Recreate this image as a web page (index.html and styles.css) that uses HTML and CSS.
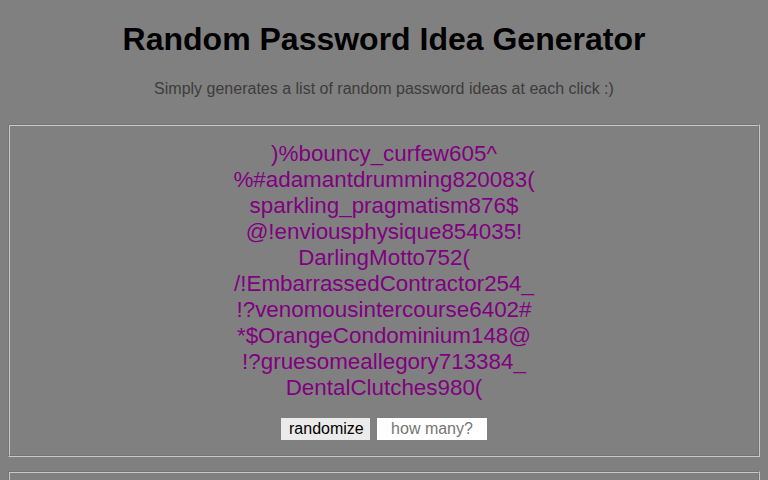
FILE: index.html
```html
<!DOCTYPE html>
<html>
<head>
<meta charset="utf-8">
<link rel="stylesheet" href="styles.css">
</head>
<body>
<h1 class="title">Random Password Idea Generator</h1>
<p class="subtitle">Simply generates a list of random password ideas at each click :)</p>
<fieldset class="box">
  <div class="list">
    <div>)%bouncy_curfew605^</div>
    <div>%#adamantdrumming820083(</div>
    <div>sparkling_pragmatism876$</div>
    <div>@!enviousphysique854035!</div>
    <div>DarlingMotto752(</div>
    <div>/!EmbarrassedContractor254_</div>
    <div>!?venomousintercourse6402#</div>
    <div>*$OrangeCondominium148@</div>
    <div>!?gruesomeallegory713384_</div>
    <div>DentalClutches980(</div>
  </div>
  <div class="controls">
    <button class="btn">randomize</button>
    <input class="count" type="text" placeholder="how many?">
  </div>
</fieldset>
<fieldset class="box second"></fieldset>
</body>
</html>
```

FILE: styles.css
```css
html, body {
  background: #808080;
}
body {
  margin: 8px;
  font-family: "Liberation Sans", Arial, sans-serif;
  text-align: center;
}
.title {
  font-size: 32px;
  font-weight: bold;
  color: #000;
  margin: 13px 0 0;
  line-height: 37px;
}
.subtitle {
  font-size: 16px;
  color: #3c3c3c;
  margin: 22px 0 0;
  line-height: 18px;
}
.box {
  margin: 26px 0 0;
  padding: 15px 12px 0;
  border: 2px groove #c8c8c8;
  min-height: 0;
}
.list {
  color: #800080;
  font-size: 22.4px;
  line-height: 26px;
}
.controls {
  display: flex;
  justify-content: center;
  gap: 7px;
  margin-top: 17px;
  height: 37px;
}
.btn {
  font-family: "Liberation Sans", Arial, sans-serif;
  font-size: 16px;
  background: #ebebeb;
  border: none;
  padding: 0 8px;
  height: 22px;
  width: 89px;
  color: #000;
}
.count {
  font-family: "Liberation Sans", Arial, sans-serif;
  font-size: 16px;
  width: 110px;
  height: 22px;
  box-sizing: border-box;
  border: none;
  padding: 0;
  background: #fff;
  text-align: center;
}
.count::placeholder {
  color: #757575;
}
.second {
  margin-top: 14px;
  height: 20px;
  padding: 0;
}
```
